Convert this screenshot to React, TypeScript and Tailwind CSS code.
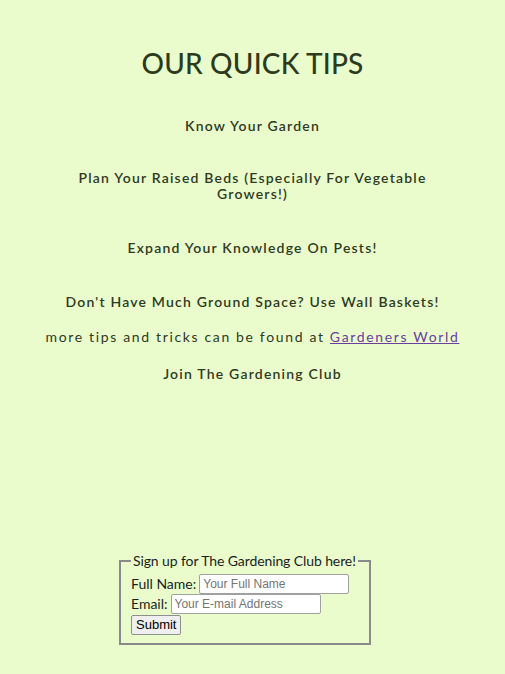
export default function App() {
  const tips = [
    'Know Your Garden',
    'Plan Your Raised Beds (Especially For Vegetable Growers!)',
    'Expand Your Knowledge On Pests!',
    "Don't Have Much Ground Space? Use Wall Baskets!",
  ];

  return (
    <div className="min-h-[674px] bg-[#eafccc] font-['Lato','Liberation_Sans',sans-serif] text-[#2f3a22]">
      <div className="flex flex-col items-center px-[40px] pt-[44px] text-center">
        <h1 className="text-[28px] font-medium leading-[38px] tracking-[0.2px] text-[#2c3a1d]">OUR QUICK TIPS</h1>

        <div className="mt-[36px] flex flex-col">
          {tips.map((tip, i) => (
            <h3
              key={tip}
              className={`mx-auto max-w-[380px] text-[14px] font-semibold leading-[16px] tracking-[1.2px] ${i === 1 ? 'mt-[36px]' : i > 1 ? 'mt-[38px]' : ''}`}
            >
              {tip}
            </h3>
          ))}
        </div>

        <p className="mt-[18px] text-[14px] leading-[17px] tracking-[1.65px]">
          more tips and tricks can be found at{' '}
          <a href="#" className="text-[#6b3fa0] underline">
            Gardeners World
          </a>
        </p>

        <h3 className="mt-[20px] text-[14px] font-semibold leading-[17px] tracking-[1.2px]">Join The Gardening Club</h3>
      </div>

      <form className="ml-[119px] mt-[169px] w-[252px]">
        <fieldset className="border-2 border-[#8a8a8a] px-[10px] pb-[8px] text-[14px] leading-[20px] text-[#1c1c1c]">
          <legend className="px-[2px] tracking-[-0.1px]">Sign up for The Gardening Club here!</legend>
          <div className="mt-[3px] flex h-[20px] items-center gap-[3px]">
            <label>Full Name:</label>
            <input
              placeholder="Your Full Name"
              className="h-[20px] w-[150px] rounded-[2px] border border-[#a0a0a0] bg-white px-[3px] font-['Liberation_Sans',Arial,sans-serif] text-[12px] placeholder:text-[#757575]"
            />
          </div>
          <div className="flex h-[20px] items-center gap-[3px]">
            <label>Email:</label>
            <input
              placeholder="Your E-mail Address"
              className="h-[20px] w-[150px] rounded-[2px] border border-[#a0a0a0] bg-white px-[3px] font-['Liberation_Sans',Arial,sans-serif] text-[12px] placeholder:text-[#757575]"
            />
          </div>
          <button
            type="button"
            className="h-[20px] rounded-[2px] border border-[#8f8f8f] bg-[#efefef] px-[4px] font-['Liberation_Sans',Arial,sans-serif] text-[13px] leading-[16px] text-black"
          >
            Submit
          </button>
        </fieldset>
      </form>
    </div>
  );
}
